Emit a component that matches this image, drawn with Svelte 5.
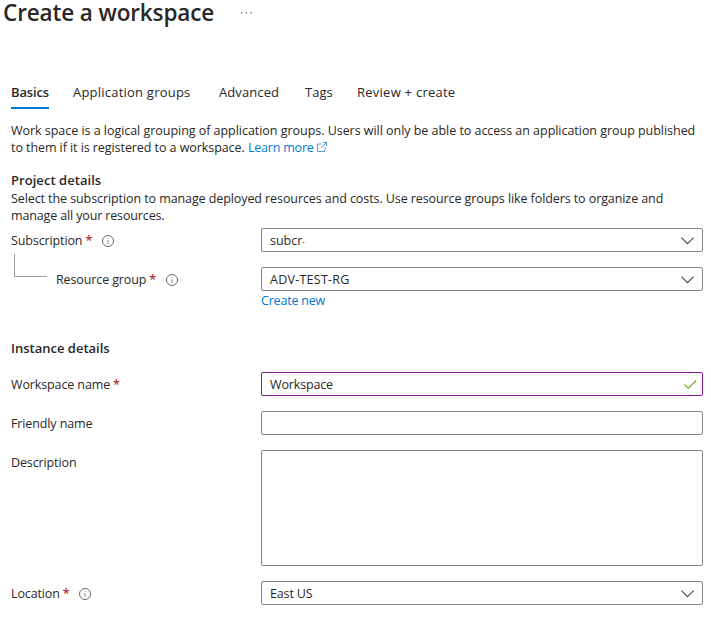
<script>
  const tabs = [
    { id: 'basics', label: 'Basics', width: 38 },
    { id: 'groups', label: 'Application groups', width: 118 },
    { id: 'advanced', label: 'Advanced', width: 61 },
    { id: 'tags', label: 'Tags', width: 28 },
    { id: 'review', label: 'Review + create', width: 98 }
  ];
</script>

{#snippet info()}
  <svg class="info" width="12" height="12" viewBox="0 0 12 12" fill="none" stroke="#6b6968">
    <circle cx="6" cy="6" r="5.5" />
    <path d="M6 5v4M6 3v1" stroke="#8a8886" />
  </svg>
{/snippet}

{#snippet chevron()}
  <svg width="13" height="8" viewBox="0 0 13 8" fill="none" stroke="#484644" stroke-width="1.1">
    <path d="M.4.6 6.5 6.7 12.6.6" />
  </svg>
{/snippet}

<main>
  <header>
    <h1>Create a workspace</h1>
    <svg class="more" width="12" height="2" viewBox="0 0 12 2" fill="#777"><path d="M0 0h1.3v1.5H0zM4.7 0H6v1.5H4.7zM9.4 0h1.3v1.5H9.4z" /></svg>
  </header>

  <nav>
    {#each tabs as tab, i}
      <span class="tab {tab.id}" class:active={i === 0} style="width: {tab.width}px">{tab.label}</span>
    {/each}
  </nav>

  <p class="intro">
    <span class="i1">Work space is a logical grouping of application groups. Users will only be able to access an application group published</span><br />
    <span class="i2">to them if it is registered to a workspace.</span> <span class="link learn">Learn more</span><svg class="ext" width="10" height="10" viewBox="0 0 10 10" fill="none" stroke="#2b88d8" stroke-width=".8"><path d="M4.5 2H.5v7.5H8V5.5M6 .5h3.5V4M9.5.5 4 6" /></svg>
  </p>

  <h2 class="project">Project details</h2>
  <p class="hint">
    <span class="t1">Select the subscription to manage deployed resources and costs. Use resource groups like folders to organize and</span><br />
    <span class="t2">manage all your resources.</span>
  </p>

  <div class="row first">
    <div class="label"><span class="text">Subscription</span><b>*</b>{@render info()}</div>
    <div class="field"><span>subcr<span class="cut">·</span></span>{@render chevron()}</div>
  </div>
  <div class="row">
    <div class="label"><i class="elbow"></i><span class="text">Resource group</span><b>*</b>{@render info()}</div>
    <div class="field"><span class="caps">ADV-TEST-RG</span>{@render chevron()}</div>
  </div>
  <div class="link create"><span>Create new</span></div>

  <h2 class="instance">Instance details</h2>
  <div class="row first">
    <div class="label"><span class="text">Workspace name</span><b>*</b></div>
    <div class="field valid"><span class="value">Workspace</span>
      <svg class="check" width="13" height="9" viewBox="0 0 13 9" fill="none" stroke="#6bb328" stroke-width="1.2"><path d="M.5 4.5 4.3 8.2 12.2.5" /></svg>
    </div>
  </div>
  <div class="row">
    <div class="label"><span class="text">Friendly name</span></div>
    <div class="field"></div>
  </div>
  <div class="row">
    <div class="label"><span class="text">Description</span></div>
    <div class="field tall"></div>
  </div>
  <div class="row">
    <div class="label"><span class="text">Location</span><b>*</b>{@render info()}</div>
    <div class="field"><span class="value">East US</span>{@render chevron()}</div>
  </div>
</main>

<style>
  :global(body) { background: #fff; }
  main {
    box-sizing: border-box;
    width: 711px;
    height: 624px;
    padding: 0 8px 0 11px;
    font: 12.5px/17px "Open Sans", "Noto Sans", sans-serif;
    color: #292827;
    white-space: nowrap;
  }
  h1, h2, p { margin: 0; }
  header { display: flex; height: 83px; margin-left: -8px; }
  h1 { width: 238px; font-size: 22.5px; font-weight: 600; line-height: 26px; letter-spacing: -.13px; }
  .more { margin-top: 12px; }
  nav { display: flex; gap: 25px; height: 26px; font-size: 13px; line-height: 19px; }
  .tab { box-sizing: border-box; }
  .basics { letter-spacing: -.15px; }
  .groups { margin-left: -1px; letter-spacing: .22px; }
  .advanced { margin-left: 3px; letter-spacing: .1px; }
  .review { margin-left: -1px; letter-spacing: .25px; }
  .active { font-weight: 600; border-bottom: 2px solid #0078d4; }
  .intro { margin-top: 13px; }
  .i1 { letter-spacing: -.035px; }
  .i2 { letter-spacing: -.07px; }
  .t1 { letter-spacing: -.088px; }
  .t2 { letter-spacing: -.14px; }
  .link { color: #0078d4; letter-spacing: -.2px; }
  .ext { margin-left: 3px; }
  h2 { font-size: 13px; font-weight: 600; line-height: 18px; }
  .project { margin-top: 15px; letter-spacing: .05px; }
  .hint { margin-top: 1px; }
  .row { display: flex; margin-top: 15px; }
  .row.first { margin-top: 4px; }
  .label { display: flex; width: 250px; height: 24px; line-height: 26px; }
  .text { letter-spacing: -.12px; }
  .caps { letter-spacing: .25px; }
  .value { letter-spacing: -.15px; }
  b { width: 6px; margin: 0 1px 0 3px; font-weight: 400; line-height: 25px; color: #a4262c; -webkit-text-stroke: .15px #a4262c; }
  .info { margin: 7px 0 0 9.5px; }
  .elbow { width: 32px; height: 22px; margin: -13px 9px 0 3px; border: solid #a19f9d; border-width: 0 0 1px 1px; }
  .field {
    box-sizing: border-box;
    display: flex;
    align-items: center;
    justify-content: space-between;
    width: 442px;
    height: 24px;
    padding: 1px 8px 0;
    border: 1px solid #8a8886;
    border-radius: 2px;
  }
  .cut { font-size: 8px; -webkit-text-stroke: .3px; }
  .valid { border-color: #881798; padding-right: 5px; }
  .tall { height: 116px; }
  .create { margin: 1px 0 0 250px; }
  .instance { margin-top: 30px; }
  .instance + .first { margin-top: 15px; }
</style>
